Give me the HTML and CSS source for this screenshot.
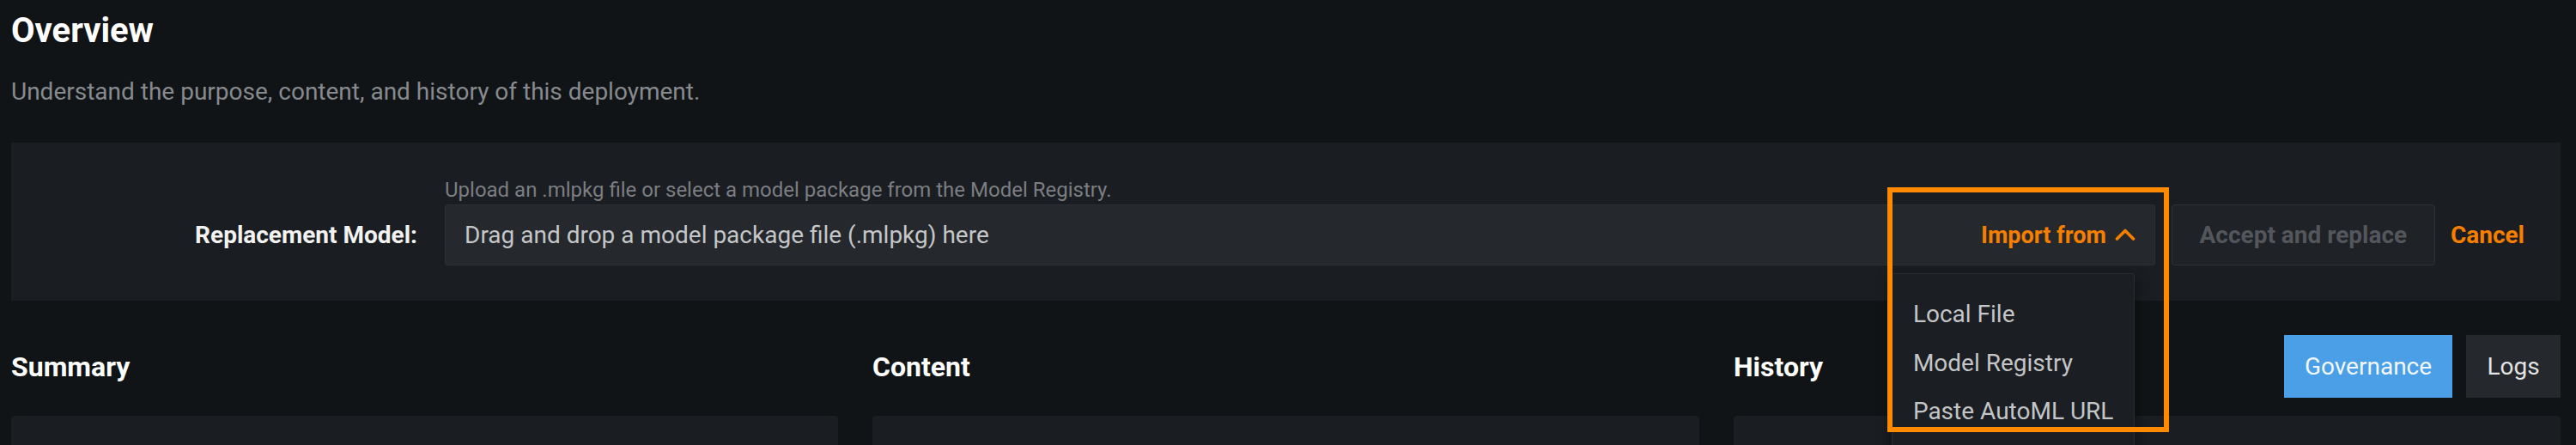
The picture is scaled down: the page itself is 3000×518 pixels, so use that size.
FILE: index.html
```html
<!DOCTYPE html>
<html lang="en">
<head>
<meta charset="utf-8">
<title>Overview</title>
<link rel="stylesheet" href="styles.css">
</head>
<body>
<div class="page">
  <header class="intro">
    <h1 class="title">Overview</h1>
    <p class="subtitle">Understand the purpose, content, and history of this deployment.</p>
  </header>

  <section class="replace-panel">
    <div class="hint">Upload an .mlpkg file or select a model package from the Model Registry.</div>
    <div class="replace-label">Replacement Model:</div>
    <div class="field-row">
      <div class="dropzone">
        <span class="placeholder">Drag and drop a model package file (.mlpkg) here</span>
        <div class="import-wrap">
          <button class="import-btn" type="button">Import from
            <svg class="chevron" width="24" height="15" viewBox="0 0 24 15" aria-hidden="true"><path d="M2.5 13 L12 3.5 L21.5 13" fill="none" stroke="currentColor" stroke-width="3.6" stroke-linecap="round" stroke-linejoin="round"/></svg>
          </button>
          <ul class="import-menu">
            <li class="menu-item">Local File</li>
            <li class="menu-item">Model Registry</li>
            <li class="menu-item">Paste AutoML URL</li>
          </ul>
          <div class="highlight"></div>
        </div>
      </div>
      <button class="accept-btn" type="button">Accept and replace</button>
      <button class="cancel-btn" type="button">Cancel</button>
    </div>
  </section>

  <section class="columns">
    <div class="col">
      <div class="col-head"><h2 class="col-title">Summary</h2></div>
      <div class="card"></div>
    </div>
    <div class="col">
      <div class="col-head"><h2 class="col-title">Content</h2></div>
      <div class="card"></div>
    </div>
    <div class="col">
      <div class="col-head">
        <h2 class="col-title">History</h2>
        <div class="actions">
          <button class="btn-primary" type="button">Governance</button>
          <button class="btn-dark" type="button">Logs</button>
        </div>
      </div>
      <div class="card"></div>
    </div>
  </section>
</div>
</body>
</html>
```

FILE: styles.css
```css
html, body {
  margin: 0;
  padding: 0;
  height: 100%;
  overflow: hidden;
  background: #111416;
}

body {
  font-family: Roboto, "Liberation Sans", Arial, sans-serif;
  color: #e6e7e8;
}

.page {
  padding: 13px 18px 0 13px;
}

.title {
  margin: 0;
  font-size: 40px;
  line-height: 45px;
  font-weight: 700;
  color: #ffffff;
}

.subtitle {
  margin: 34px 0 0;
  font-size: 28px;
  line-height: 30px;
  color: #878a8e;
}

.replace-panel {
  margin-top: 44px;
  background: #1a1d21;
  display: grid;
  grid-template-columns: 473px 1fr;
  column-gap: 32px;
  row-gap: 3px;
  padding: 42px 42px 41px 0;
}

.hint {
  grid-column: 2;
  grid-row: 1;
  font-size: 24px;
  line-height: 27px;
  color: #7b7e82;
}

.replace-label {
  grid-column: 1;
  grid-row: 2;
  align-self: center;
  text-align: right;
  font-size: 28px;
  font-weight: 700;
  color: #f2f2f2;
}

.field-row {
  grid-column: 2;
  grid-row: 2;
  display: flex;
  align-items: center;
  height: 71px;
}

.dropzone {
  flex: 1;
  height: 71px;
  box-sizing: border-box;
  display: flex;
  align-items: center;
  background: #25282c;
  border: 1px solid #2c3035;
  border-radius: 3px;
}

.placeholder {
  padding-left: 22px;
  font-size: 28px;
  color: #c4c6c8;
}

.import-wrap {
  margin-left: auto;
  align-self: stretch;
  position: relative;
  display: flex;
}

.import-btn {
  display: flex;
  align-items: center;
  gap: 10px;
  padding: 0 22px 0 22px;
  background: transparent;
  border: none;
  font-family: inherit;
  font-size: 27px;
  font-weight: 700;
  color: #f77f00;
}

.chevron {
  display: block;
  margin-top: -3px;
}

.import-menu {
  position: absolute;
  top: 79px;
  right: 23px;
  width: 283px;
  box-sizing: border-box;
  margin: 0;
  padding: 19px 0 16px;
  list-style: none;
  background: #1b1e22;
  border: 1px solid #2a2e33;
  border-radius: 3px;
  box-shadow: 0 6px 16px rgba(0, 0, 0, 0.55);
  z-index: 5;
}

.menu-item {
  padding: 0 24px;
  font-size: 28px;
  line-height: 56.5px;
  color: #c3c5c7;
  white-space: nowrap;
}

.highlight {
  position: absolute;
  top: -21px;
  right: -17px;
  width: 328px;
  height: 285px;
  box-sizing: border-box;
  border: 6px solid #ff8a00;
  z-index: 6;
  pointer-events: none;
}

.accept-btn {
  margin-left: 19px;
  height: 71px;
  width: 307px;
  box-sizing: border-box;
  background: #1f2227;
  border: 1px solid #2e3238;
  border-radius: 4px;
  font-family: inherit;
  font-size: 28px;
  font-weight: 700;
  color: #53575c;
}

.cancel-btn {
  margin-left: 18px;
  padding: 0;
  background: transparent;
  border: none;
  font-family: inherit;
  font-size: 28px;
  font-weight: 700;
  color: #f77f00;
}

.columns {
  margin-top: 40px;
  display: grid;
  grid-template-columns: repeat(3, 1fr);
  column-gap: 40px;
}

.col-head {
  height: 73px;
  display: flex;
  align-items: center;
  justify-content: space-between;
}

.col-title {
  margin: 0;
  font-size: 32px;
  font-weight: 700;
  color: #ffffff;
}

.actions {
  display: flex;
  gap: 16px;
  height: 73px;
}

.btn-primary,
.btn-dark {
  height: 73px;
  border: none;
  font-family: inherit;
  font-size: 28px;
  padding: 0 20px;
}

.btn-primary {
  width: 196px;
  background: #4a9fe6;
  color: #f3f8fd;
}

.btn-dark {
  width: 110px;
  background: #25282c;
  color: #e3e4e5;
}

.card {
  margin-top: 21px;
  height: 300px;
  background: #1a1d21;
  border-radius: 4px;
}
```
